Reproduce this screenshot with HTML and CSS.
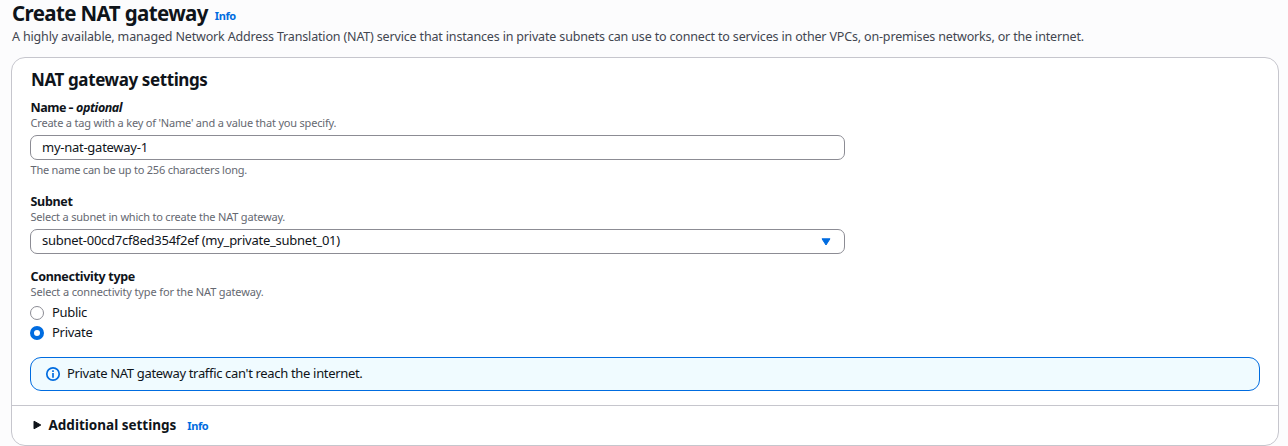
FILE: index.html
```html
<!DOCTYPE html>
<html lang="en">
<head>
<meta charset="utf-8">
<title>Create NAT gateway</title>
<link rel="stylesheet" href="styles.css">
</head>
<body>
<header class="page-header">
  <div class="title-row"><h1 class="page-title">Create NAT gateway</h1><a class="info">Info</a></div>
  <p class="description">A highly available, managed Network Address Translation (NAT) service that instances in private subnets can use to connect to services in other VPCs, on-premises networks, or the internet.</p>
</header>
<main class="card">
  <div class="card-body">
    <h2 class="card-title">NAT gateway settings</h2>
    <section class="field">
      <div class="label label-name">Name <span class="dash">-</span> <em>optional</em></div>
      <div class="hint">Create a tag with a key of 'Name' and a value that you specify.</div>
      <div class="control"><span>my-nat-gateway-1</span></div>
      <div class="hint constraint">The name can be up to 256 characters long.</div>
    </section>
    <section class="field field-subnet">
      <div class="label">Subnet</div>
      <div class="hint">Select a subnet in which to create the NAT gateway.</div>
      <div class="control control-select"><span>subnet-00cd7cf8ed354f2ef (my_private_subnet_01)</span>
        <svg class="caret" width="10" height="8" viewBox="0 0 10 8"><path d="M1 .8h8L5 7z" fill="#006ce0" stroke="#006ce0" stroke-linejoin="round"/></svg>
      </div>
    </section>
    <section class="field field-type">
      <div class="label">Connectivity type</div>
      <div class="hint hint-type">Select a connectivity type for the NAT gateway.</div>
      <div class="radios">
        <div class="radio"><i class="dot"></i><span>Public</span></div>
        <div class="radio"><i class="dot dot-on"></i><span>Private</span></div>
      </div>
    </section>
    <div class="alert">
      <svg width="16" height="16" viewBox="0 0 16 16" fill="none" stroke="#006ce0"><circle cx="8" cy="8" r="6.2" stroke-width="1.7"/><path d="M8 4.2v1.7M8 7v4.8" stroke-width="1.7"/></svg>
      <span>Private NAT gateway traffic can't reach the internet.</span>
    </div>
  </div>
  <div class="expander">
    <svg width="9" height="10" viewBox="0 0 9 10"><path d="M1 1.2v7.6L7.8 5z" fill="#0f141a" stroke="#0f141a" stroke-linejoin="round"/></svg>
    <span class="expander-title">Additional settings</span><a class="info">Info</a>
  </div>
</main>
</body>
</html>
```
FILE: styles.css
```css
* { box-sizing: border-box; }
body {
  margin: 0;
  height: 446px;
  overflow: hidden;
  background: #fcfcfd;
  color: #0f141a;
  font: 13px/16px "Noto Sans", "Open Sans", sans-serif;
  letter-spacing: -.3px;
  white-space: nowrap;
}
h1, h2, p { margin: 0; }
.page-header { padding-left: 12px; height: 57px; }
.title-row { display: flex; align-items: flex-start; gap: 7px; height: 25px; }
.page-title { margin-top: 1px; font-size: 20.5px; line-height: 24px; font-weight: 700; letter-spacing: -.62px; }
.info { color: #006ce0; font-size: 11px; font-weight: 700; letter-spacing: -.4px; }
.title-row .info { margin-top: 8px; }
.description { margin-top: 4px; color: #424650; font-size: 12.5px; letter-spacing: -.162px; }
.card {
  margin: 0 9px 0 11px;
  height: 389px;
  border: 1px solid #c6c6cd;
  border-radius: 14px;
  background: #fff;
}
.card-body { height: 348px; padding: 10px 18px 0; border-bottom: 1px solid #c6c6cd; }
.card-title { padding-left: 1px; margin-bottom: 8px; font-size: 17px; line-height: 24px; letter-spacing: -.4px; }
.label { padding-left: .5px; font-weight: 700; font-size: 12.5px; height: 15px; letter-spacing: -.31px; }
.label-name { letter-spacing: -.46px; }
.dash { display: inline-block; transform: scaleX(1.25); margin: 0 .5px; }
.hint { padding-left: .5px; color: #656871; font-size: 11px; height: 16px; letter-spacing: -.195px; }
.hint-type { letter-spacing: -.14px; }
.control {
  display: flex;
  align-items: center;
  justify-content: space-between;
  width: 815px;
  height: 25px;
  margin-top: 4px;
  padding: 0 13px 1px 11px;
  border: 1px solid #8c8c94;
  border-radius: 7px;
  background: #fff;
  letter-spacing: -.26px;
}
.control-select { padding-bottom: 3px; letter-spacing: -.25px; }
.caret { margin-top: 3px; }
.constraint { margin-top: 2px; letter-spacing: -.22px; }
.field-subnet { margin-top: 16px; }
.field-type { margin-top: 15px; }
.radios { margin-top: 2px; }
.radio { display: flex; align-items: center; gap: 8px; height: 20px; }
.dot { width: 14px; height: 14px; margin-top: 2px; border: 1px solid #8c8c94; border-radius: 50%; }
.dot-on { border: 4.5px solid #006ce0; }
.alert {
  display: flex;
  align-items: center;
  gap: 6px;
  height: 34px;
  margin-top: 15px;
  padding: 0 15px 0 14px;
  border: 1px solid #006ce0;
  border-radius: 11px;
  background: #f0fbff;
}
.alert span { padding-bottom: 2px; letter-spacing: -.33px; }
.expander { display: flex; align-items: center; height: 39px; padding: 0 0 1px 21px; }
.expander-title { margin: 0 11px 0 6.5px; padding-bottom: 1px; font-size: 13.5px; font-weight: 700; letter-spacing: 0; }
.expander .info { padding-top: 2px; }
```
